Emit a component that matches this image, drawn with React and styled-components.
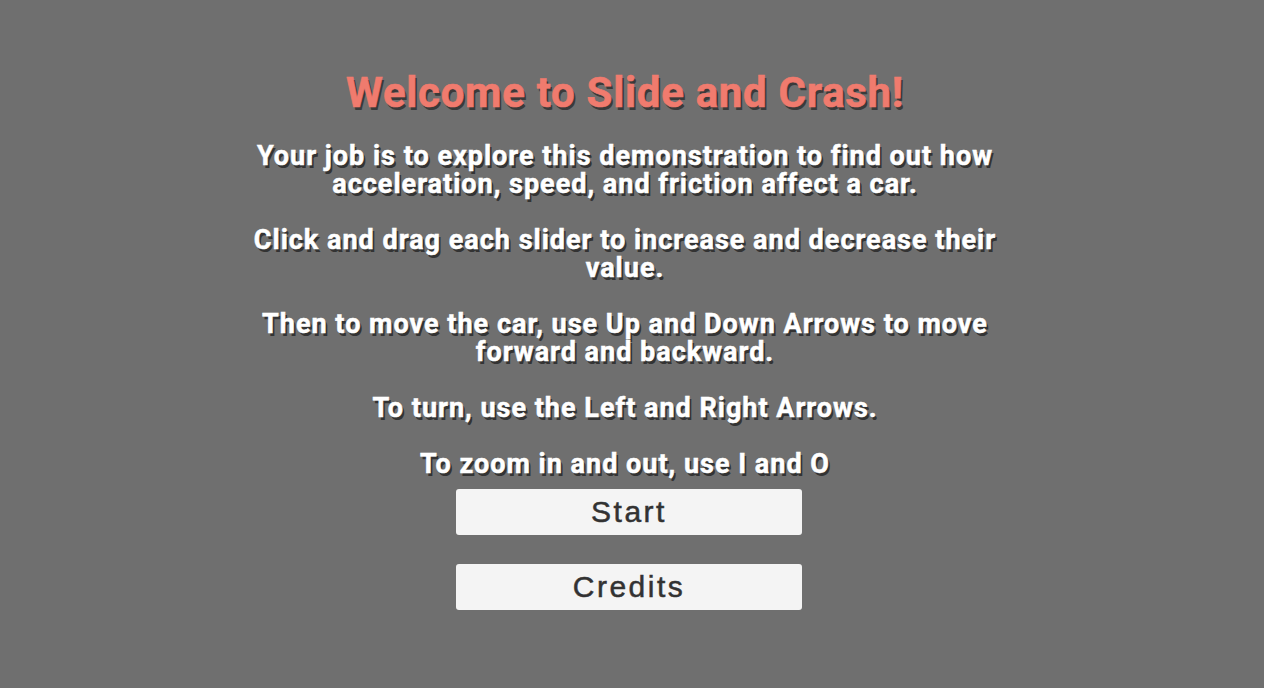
import React from "react";
import styled, { createGlobalStyle } from "styled-components";

const Global = createGlobalStyle`
  html, body { margin: 0; padding: 0; background: #6f6f6f; }
  #root { min-height: 688px; }
`;

const Screen = styled.div`
  width: 1264px;
  height: 688px;
  background: #6f6f6f;
  display: flex;
  flex-direction: column;
  align-items: center;
  padding: 83px 14px 0 0;
  box-sizing: border-box;
  font-family: Roboto, "Liberation Sans", sans-serif;
`;

const Title = styled.h1`
  margin: 0;
  font-size: 42px;
  font-weight: 700;
  line-height: 20px;
  letter-spacing: 0.7px;
  color: #f07b6e;
  -webkit-text-stroke: 0.6px #f07b6e;
  text-shadow: 2px 3px 0 #3a3a3a;
`;

const Instructions = styled.div`
  margin-top: 39px;
  width: 800px;
  text-align: center;
  color: #ffffff;
  font-size: 27px;
  font-weight: 700;
  line-height: 28px;
  letter-spacing: 1px;
  -webkit-text-stroke: 0.5px #ffffff;
  text-shadow: 2px 3px 0 #333333;
`;

const Para = styled.p`
  margin: 0 0 28px;
  &:last-child { margin-bottom: 0; }
`;

const Button = styled.button`
  width: 346px;
  height: 46px;
  margin: ${(p) => p.$gap}px 0 0 8px;
  border: none;
  border-radius: 3px;
  background: #f4f4f4;
  color: #323232;
  font-family: "Liberation Sans", Arial, sans-serif;
  font-size: 30px;
  font-weight: 400;
  letter-spacing: 2.5px;
  -webkit-text-stroke: 0.5px #323232;
  padding: 0;
  cursor: pointer;
`;

export default function App() {
  return (
    <>
      <Global />
      <Screen>
        <Title>Welcome to Slide and Crash!</Title>
        <Instructions>
          <Para>Your job is to explore this demonstration to find out how acceleration, speed, and friction affect a car.</Para>
          <Para>Click and drag each slider to increase and decrease their value.</Para>
          <Para>Then to move the car, use Up and Down Arrows to move forward and backward.</Para>
          <Para>To turn, use the Left and Right Arrows.</Para>
          <Para>To zoom in and out, use I and O</Para>
        </Instructions>
        <Button $gap={11}>Start</Button>
        <Button $gap={29}>Credits</Button>
      </Screen>
    </>
  );
}
